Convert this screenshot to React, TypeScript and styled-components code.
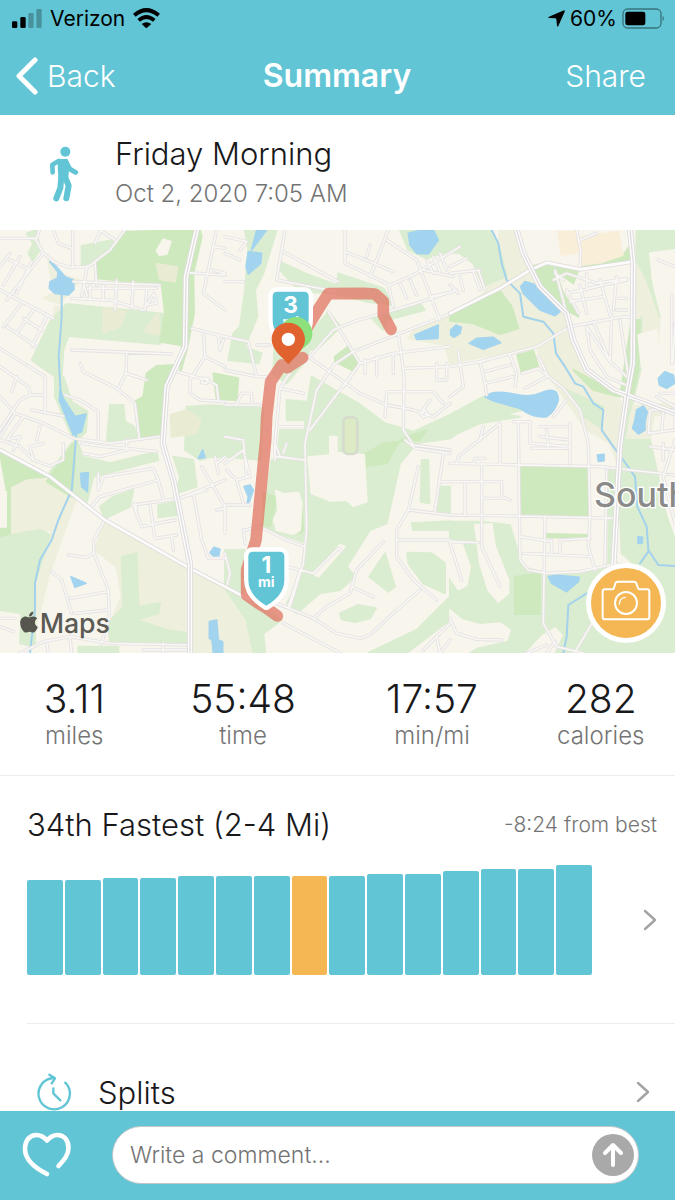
import React, { useState } from 'react';
import styled, { createGlobalStyle } from 'styled-components';
import { FaApple } from 'react-icons/fa';

const colors = {
  teal: '#61c5d5',
  orange: '#f4b754',
  text: '#19191b',
  muted: '#747474',
  line: '#ececec',
};

const GlobalStyle = createGlobalStyle`
  * {
    box-sizing: border-box;
  }

  body {
    margin: 0;
    background: #fff;
    color: ${colors.text};
    font-family: Inter, 'Liberation Sans', sans-serif;
    font-weight: 300;
  }

  button,
  input {
    font: inherit;
  }
`;

const Page = styled.div`
  display: flex;
  flex-direction: column;
  height: 100vh;
`;

const TopBar = styled.header`
  flex: none;
  background: ${colors.teal};
`;

const StatusBar = styled.div`
  display: flex;
  align-items: center;
  justify-content: space-between;
  height: 36px;
  padding: 0 10px 0 12px;
  color: #000;
  font-size: 21px;
  font-weight: 400;
`;

const StatusGroup = styled.div<{ $gap: number }>`
  display: flex;
  align-items: center;
  gap: ${({ $gap }) => $gap}px;
`;

const NavBar = styled.nav`
  display: grid;
  grid-template-columns: 1fr auto 1fr;
  align-items: center;
  height: 79px;
  padding: 0 29px 0 16px;
  color: #fff;
`;

const NavButton = styled.button<{ $end?: boolean }>`
  display: flex;
  align-items: center;
  justify-self: ${({ $end }) => ($end ? 'end' : 'start')};
  gap: 9px;
  padding: 0;
  border: 0;
  background: none;
  color: inherit;
  font-size: 30px;
  cursor: pointer;
`;

const Title = styled.h1`
  margin: 0 0 0 12px;
  font-size: 32px;
  font-weight: 600;
`;

const Content = styled.main`
  flex: 1;
  min-height: 0;
  overflow-y: auto;
  scrollbar-width: none;
`;

const Activity = styled.section`
  display: flex;
  align-items: center;
  height: 115px;
  padding: 2px 27px 0;
`;

const RowIcon = styled.div<{ $width: number }>`
  display: flex;
  justify-content: center;
  flex: none;
  width: ${({ $width }) => $width}px;
`;

const ActivityText = styled.div`
  margin-left: 14px;
`;

const ActivityName = styled.h2`
  margin: 0;
  font-size: 31px;
  font-weight: 300;
  line-height: 40px;
`;

const ActivityDate = styled.time`
  display: block;
  color: ${colors.muted};
  font-size: 24px;
  line-height: 40px;
`;

const MapBox = styled.section`
  position: relative;
  overflow: hidden;

  > svg {
    display: block;
    width: 100%;
    height: auto;
  }
`;

const CameraButton = styled.button`
  position: absolute;
  right: 9px;
  bottom: 10px;
  display: flex;
  align-items: center;
  justify-content: center;
  width: 80px;
  height: 80px;
  padding: 0 0 4px;
  border: 5px solid #fff;
  border-radius: 50%;
  background: ${colors.orange};
  cursor: pointer;
`;

const Stats = styled.section`
  display: grid;
  grid-template-columns: 22% 28% 28% 22%;
  padding: 24px 0 23px;
  border-bottom: 1px solid ${colors.line};
`;

const Stat = styled.div`
  text-align: center;
`;

const StatValue = styled.div`
  font-size: 39px;
  line-height: 43px;
`;

const StatLabel = styled.div`
  color: ${colors.muted};
  font-size: 24px;
  line-height: 32px;
`;

const Ranking = styled.section`
  margin-left: 27px;
  padding: 28px 18px 48px 0;
  border-bottom: 1px solid ${colors.line};
`;

const RankingHeader = styled.div`
  display: flex;
  align-items: center;
  justify-content: space-between;
  height: 40px;
`;

const SectionTitle = styled.h2`
  margin: 0;
  font-size: 31px;
  font-weight: 300;
`;

const Difference = styled.span`
  color: ${colors.muted};
  font-size: 21px;
`;

const RankingBody = styled.div`
  display: flex;
  align-items: center;
  gap: 51px;
  margin-top: 21px;
`;

const Chart = styled.div`
  display: flex;
  flex: 1;
  align-items: flex-end;
  gap: 2px;
  height: 110px;
`;

const Bar = styled.div<{ $active: boolean }>`
  flex: 1;
  border-radius: 2px;
  background: ${({ $active }) => ($active ? colors.orange : colors.teal)};
`;

const IconButton = styled.button`
  display: flex;
  padding: 0;
  border: 0;
  background: none;
  cursor: pointer;
`;

const SplitsRow = styled.button`
  display: flex;
  align-items: center;
  width: 100%;
  height: 136px;
  padding: 0 25px 0 27px;
  border: 0;
  background: none;
  color: ${colors.text};
  font-size: 31px;
  text-align: left;
  cursor: pointer;
`;

const SplitsLabel = styled.span`
  flex: 1;
  margin-left: 17px;
`;

const CommentBar = styled.form`
  display: flex;
  flex: none;
  align-items: center;
  gap: 40px;
  height: 89px;
  padding: 0 36px 2px 22px;
  background: ${colors.teal};
`;

const CommentField = styled.div`
  display: flex;
  flex: 1;
  align-items: center;
  height: 58px;
  padding: 0 4px 0 17px;
  border: 1px solid #c2c6c8;
  border-radius: 29px;
  background: #fff;
`;

const CommentInput = styled.input`
  flex: 1;
  min-width: 0;
  padding: 0;
  border: 0;
  outline: 0;
  background: none;
  color: ${colors.text};
  font-size: 23px;

  &::placeholder {
    color: ${colors.muted};
    opacity: 1;
  }
`;

const SendButton = styled.button`
  display: flex;
  align-items: center;
  justify-content: center;
  width: 42px;
  height: 42px;
  padding: 0;
  border: 0;
  border-radius: 50%;
  background: #a9a9a9;
  cursor: pointer;
`;

const SignalIcon = () => (
  <svg width="30" height="19" viewBox="0 0 90 57">
    <rect x="0" y="37" width="16" height="20" rx="4" />
    <rect x="25" y="24" width="16" height="33" rx="4" />
    <g opacity="0.25">
      <rect x="49" y="12" width="16" height="45" rx="4" />
      <rect x="73" y="0" width="16" height="57" rx="4" />
    </g>
  </svg>
);

const WifiIcon = () => (
  <svg width="27" height="20" viewBox="0 0 81 60" fill="none" stroke="#000">
    <path d="M4 22Q40 -9 77 22" strokeWidth="12" />
    <path d="M17 37Q40 17 64 37" strokeWidth="11" />
    <path d="M26 48Q40 37 55 48L40 61Z" fill="#000" stroke="none" />
  </svg>
);

const LocationIcon = () => (
  <svg width="17" height="17" viewBox="0 0 51 51">
    <path d="M48 1Q51 1 50 5L31 48Q28 52 27 47L25 27Q24 25 22 25L3 24Q-2 23 3 20Z" />
  </svg>
);

const BatteryIcon = () => (
  <svg width="43" height="21" viewBox="0 0 129 63">
    <rect x="3" y="3" width="114" height="57" rx="14" fill="none" stroke="#000" strokeOpacity="0.42" strokeWidth="4" />
    <rect x="10" y="11" width="60" height="41" rx="7" />
    <path d="M122 23Q129 31 122 40Z" opacity="0.45" />
  </svg>
);

const BackIcon = () => (
  <svg width="22" height="38" viewBox="0 0 22 38" fill="none" stroke="#fff" strokeWidth="5" strokeLinecap="round" strokeLinejoin="round">
    <path d="M19 3L3 19L19 35" />
  </svg>
);

const WalkIcon = () => (
  <svg width="30" height="56" viewBox="0 0 90 168" fill="none" stroke={colors.teal} strokeLinecap="round" strokeLinejoin="round">
    <circle cx="49" cy="17" r="15" fill={colors.teal} stroke="none" />
    <path d="M30 45H52Q55 65 52 94H34Q32 70 32 50Z" fill={colors.teal} strokeWidth="12" />
    <path d="M29 45L10 56L11 79" strokeWidth="14" />
    <path d="M50 46L62 69L80 79" strokeWidth="15" />
    <path d="M37 92L34 126L22 157" strokeWidth="18" />
    <path d="M47 90L59 119L52 157" strokeWidth="18" />
  </svg>
);

const ChevronIcon = () => (
  <svg width="14" height="22" viewBox="0 0 14 22" fill="none" stroke="#a3a3a3" strokeWidth="2.4" strokeLinecap="round" strokeLinejoin="round">
    <path d="M2 2L12 11L2 20" />
  </svg>
);

const SplitsIcon = () => (
  <svg width="36" height="38" viewBox="0 0 108 114" fill="none" stroke={colors.teal} strokeWidth="7" strokeLinecap="round" strokeLinejoin="round">
    <path d="M88 29A47 47 0 1 1 54 15" />
    <path d="M40 5L57 16L47 31" />
    <path d="M52 46V61L73 82" />
  </svg>
);

const HeartIcon = () => (
  <svg width="50" height="46" viewBox="0 0 50 46" fill="none" stroke="#fff" strokeWidth="4.6" strokeLinecap="round" strokeLinejoin="round">
    <path d="M25 42C13 36 3 28 3 17C3 8 8 3 14.500 3C19 3 22 5 25 8.500C28 5 31 3 35.500 3C42 3 46.500 8 46.500 16C46.500 23 42 28 36.500 34" />
  </svg>
);

const CameraIcon = () => (
  <svg width="50" height="42" viewBox="0 0 150 126" fill="none" stroke="#fff" strokeWidth="6" strokeLinecap="round" strokeLinejoin="round">
    <path d="M11 28H34Q38 28 39 24L43 10Q45 5 50 5H99Q104 5 106 10L111 24Q112 28 116 28H139Q145 28 145 34V112Q145 118 139 118H11Q5 118 5 112V34Q5 28 11 28Z" />
    <circle cx="75" cy="69" r="33" />
    <path d="M55 72Q56 54 73 52" strokeWidth="4" />
  </svg>
);

const ArrowUpIcon = () => (
  <svg width="22" height="26" viewBox="0 0 22 26" fill="none" stroke="#fff" strokeWidth="4" strokeLinecap="round" strokeLinejoin="round">
    <path d="M11 23V4M3 11L11 3L19 11" />
  </svg>
);

/** Map geometry, one list per kind of ground */
const meadows = [
  'M30 770L105 735L230 800L150 1025L105 1200L60 1220L100 1110L155 900L35 910Z',
  'M285 960L315 870L570 1015L700 1085L745 1180L760 1269H575L570 1240L400 1210L330 1180L365 1100L350 1010Z',
  'M1500 0H1550L1590 130L1700 260L1730 380L1820 480L1880 530L1860 720L1830 640L1760 600L1640 430L1610 350L1350 400L1335 345L1225 325L1245 295L1350 260L1450 190L1480 150Z',
  'M1910 0H2025V60L1960 80V160L1990 180L1985 340L1975 400L1920 410L1900 520L1880 560L1900 300Z',
  'M1875 530L2025 520V540L1960 560L1940 700L1870 720Z',
  'M145 90L175 130L240 150L180 220L130 205L160 190Z',
  'M165 230L200 230L175 420L145 410Z',
];

const lightGreens = [
  'M80 10L110 0L120 60L98 92L85 70L100 40Z',
  'M245 48L350 28L300 90L245 108Z',
  'M200 222L380 240L495 252L480 342L205 318L190 360L185 440L165 440L95 390L150 275Z',
  'M165 440H190L215 515L262 545L258 605L225 640L190 560L165 500Z',
  'M330 525L370 525L375 575L402 590L415 625L320 640Z',
  'M560 530L640 526L790 535L780 690L675 680L600 682L555 655Z',
  'M735 0H830L790 130L765 180L772 260L735 350L785 370L775 400L685 390L700 310L720 290L735 180L745 60Z',
  'M840 95L915 130L1010 165L1015 130L1150 175L1180 225L1100 215L1000 190L900 185L835 115Z',
  'M985 245L1022 290L960 350L925 362L932 310Z',
  'M825 300L930 360L910 400L860 460L820 430Z',
  'M860 510L920 515L912 570L860 570ZM840 600H910V690H830Z',
  'M1110 260L1260 220L1275 240L1160 270L1150 300Z',
  'M935 440L1075 520L1155 580L1240 605L1350 555L1450 500L1570 540L1430 570L1350 625L1250 640L1200 700L1180 790L1160 880L1110 900L1040 1010L1065 1040L1020 1080L960 1090L890 1150L860 1120L900 1060L920 900L915 560Z',
  'M815 690L920 680L922 940L860 920L785 890Z',
  'M675 960L735 960L745 1080L700 1100L675 1070Z',
  'M675 1075L750 1110L845 1170L790 1210L795 1269H760L740 1170Z',
  'M1155 970L1185 1070L1165 1085L1108 1040Z',
  'M1235 880L1350 874V900H1240Z',
  'M1222 968L1295 970L1335 1000V1090L1270 1060L1225 1000Z',
  'M1020 1150L1075 1125L1128 1135L1110 1165L1065 1176L1025 1168Z',
  'M1315 770H1350V850H1310ZM1265 690H1285L1288 820L1262 815Z',
  'M1105 1269L1250 1200L1350 1100V1170L1220 1269Z',
  'M0 920L120 900L150 915L105 1060V1250L60 1240L65 1150L0 1140Z',
  'M230 630L250 680L330 700L470 665L475 690L280 740L260 820L220 800L140 740L215 640Z',
  'M300 830L340 800L400 780L390 830L315 865Z',
  'M365 980L410 970L415 1130L480 1120L475 1150L410 1170L500 1200L570 1210L565 1240L330 1240L325 1180L370 1130Z',
  'M520 680L580 690L590 770L530 790L540 740ZM475 825L530 815L532 855L475 862Z',
  'M560 630H675V670L600 690L555 660ZM235 1250H355V1269H235Z',
  'M1200 0H1470L1500 60L1520 140L1480 155L1450 170L1420 100L1380 70L1340 66L1280 85L1225 60Z',
  'M1910 0H2025V60L1955 62L1950 150L1990 160L1980 260L1940 150L1910 90Z',
  'M1350 560L1460 545L1560 560L1440 580L1350 620Z',
  'M1700 480L1810 530L1800 590L1750 560Z',
  'M1350 875H1440L1530 885L1555 970L1565 1010L1640 1030L1800 1020L1850 1000L2025 1030V1269H1350Z',
  'M1825 720H1850L1840 1000H1825Z',
  'M1865 630H1950L1970 720L2000 860L2025 930V1050L1910 1010L1865 970L1855 720Z',
  'M1895 510L1925 260L1922 420L1885 560L1860 720V650Z',
];

const parks = [
  'M375 5L580 0L555 150L542 345L480 335L495 250L485 165L290 145L285 105Z',
  'M600 0L605 20L580 130L582 250L560 360L540 430L555 200L590 0Z',
  'M470 408L525 405L495 480L485 620L415 622L405 515L430 500L440 430Z',
  'M640 430L715 445L710 510L650 508Z',
  'M150 740L220 640L225 700L215 800L140 755ZM0 670L150 740L80 745L30 770V910L0 920V790L20 780Z',
  'M1045 350L1078 400L1065 425L1005 395L1005 380Z',
  'M1350 250L1500 183L1535 230L1555 295L1500 312L1420 280L1350 272Z',
  'M1590 110L1640 98L1735 120L1720 160L1665 120L1690 190L1735 260L1690 235L1600 130Z',
  'M1740 70L1750 110L1900 90L1895 40L1870 75L1800 105Z',
  'M1552 375L1600 362L1615 410L1565 428Z',
  'M1560 705L1765 710V860L1560 855Z',
  'M1545 1040L1620 1030V1152H1545Z',
  'M1900 490L1880 520L1870 500L1720 420L1780 480L1860 500L1895 270H1920L1915 420Z',
  'M1640 912L1765 915V925L1640 922Z',
  'M1260 630L1280 600L1200 630L1160 700L1090 710L1090 675L1150 640Z',
  'M790 790L830 800L810 890L790 885ZM880 820L905 830L910 900L900 910Z',
];

const clearings = [
  'M490 28L512 35L500 72L478 75L470 62Z',
  'M925 682L990 676V620H1010V668L1092 675L1100 815L1060 828L1040 810L990 812L935 790Z',
  'M828 782L850 792L895 788L905 820L900 900L880 912L830 900L822 870L835 840Z',
  'M1350 930L1385 940L1410 1010L1400 1065L1375 1078L1350 1040Z',
  'M1425 885L1475 882L1485 950L1525 1050L1525 1090L1495 1115L1465 1080L1440 1000Z',
  'M1350 1140L1385 1170L1440 1185L1500 1180L1530 1200L1520 1230L1430 1250L1400 1269H1350Z',
  'M1625 1220L1665 1195L1685 1215L1660 1269H1580Z',
  'M1915 315L1970 300L1980 400L1925 410ZM0 780L18 785V890L0 890Z',
  'M1950 70L2025 60V520L1975 430L1985 260L1960 160Z',
  'M945 1035L1020 945L1035 950L955 1040Z',
];

const sand = [
  'M470 102L532 112L525 155L480 148ZM310 235L378 245L360 290L310 308ZM440 290L475 250L478 315L435 305Z',
  'M512 555L560 540L602 570L590 610L515 620Z',
];

const schools = [
  'M1675 5L1730 5L1740 65L1685 75Z',
  'M1745 20L1855 5L1868 75L1810 95L1745 105Z',
];

const waters = [
  'M150 155L172 145L175 120L160 100L195 140L220 150L222 178L205 195L165 190L148 175Z',
  'M180 480L190 505L225 560L258 552L245 605L220 615L195 555L178 510Z',
  'M770 0L800 0L770 40L755 60ZM745 65L785 70L782 100L745 132L738 110Z',
  'M1225 10L1265 0H1300L1315 30L1285 72L1250 70L1230 45Z',
  'M1245 315L1315 285L1314 325L1250 328Z',
  'M1562 170L1575 155L1600 162L1675 225L1680 245L1665 257L1620 240L1570 190Z',
  'M1352 300L1368 285L1384 292L1380 310L1362 322L1352 315Z',
  'M1408 340L1430 325L1480 322L1502 338L1450 358Z',
  'M1455 500Q1475 480 1530 490Q1590 505 1620 490Q1675 465 1675 510Q1665 545 1640 560Q1600 565 1560 535L1480 513Z',
  'M1975 445L1995 425L2020 435L2024 460L2000 475L1978 465Z',
  'M1910 540L1930 528L1942 545L1935 575L1935 600L1915 612L1898 595L1905 570Z',
  'M242 730L265 728L262 785L245 770ZM595 685L608 660L615 682Z',
  'M213 1040L235 1050L258 1060L225 1072ZM630 968L642 952L660 958L656 978L640 978Z',
  'M732 770L750 765L760 780L748 815L742 818L745 800Z',
  'M628 1175L650 1170L655 1230L668 1235V1269H640L636 1230L628 1225Z',
  'M1645 1040L1670 1035L1738 1042L1735 1055L1700 1085L1655 1060Z',
  'M1792 675L1812 673V692L1795 694ZM1914 920L1928 922L1926 940H1914Z',
];

const streams = [
  'M150 95L178 130L185 190L185 260L176 380L182 490',
  'M230 600L215 780L175 870L155 930L120 990L105 1060V1140L90 1269',
  'M1475 0L1495 40L1505 100L1520 150L1560 190L1570 260L1630 275L1660 310L1668 370L1695 410L1725 460L1750 470L1780 520L1810 540L1805 600L1840 650L1870 690L1905 740L1912 830L1940 890L1945 960L1975 1005L2025 1008',
  'M1945 965L1920 1000M1760 1090L1705 1125L1700 1220L1690 1269',
];

const streets = [
  // north west
  'M0 25H105L130 70L170 100L210 112L265 110L330 60L375 0M110 25L118 0M160 0L175 40L215 55M218 0V110M285 40L300 5M300 0L345 30M262 108L245 200M285 100L290 165',
  'M130 70L90 120L20 210M0 180L160 265M30 70L0 110M60 80L10 165M95 95L50 190M90 120L30 90M65 220L10 290M100 240L50 310M140 260L95 350M70 265L125 300M20 290L110 350',
  'M215 205L350 212M220 155L480 165M250 155L262 200M270 165V205M310 165V210M350 150L345 240M400 155L395 235M262 175H470M345 215L430 240M440 180L435 240M462 190L440 225L470 220Z',
  'M215 360L515 372M380 370L378 430L355 475M378 430L440 450M240 400L250 425L350 475L405 520L418 625M195 495L240 510L295 545V635',
  'M0 355L135 440V545M0 410L85 470L92 495L60 510L0 600M92 495H135M50 440L35 485M95 540L190 558M0 500L45 550L0 620M45 550L130 580L220 625L330 640L490 618',
  'M70 560L20 630M120 590L110 630M0 630L60 650L100 690L150 708L190 690V640M20 630L60 620L40 660M100 690L90 650L130 640',
  'M675 135L560 128M675 55L640 50M650 0L610 190L675 240M640 120L675 130M575 295L675 320M610 310L615 380L675 410M615 380L570 450V490L600 510L675 515M530 425L620 450L650 465L655 510M655 320L660 360L670 330',
  'M605 445H625L620 460L605 458Z',
  // north centre
  'M675 20L740 35L720 60M675 70L720 90M675 155H730M855 0L830 150L1010 185M850 65L1015 155M1035 0V100L1170 165L1240 135L1380 50M1165 0L1110 140M1035 65L1110 95L1180 125M1160 30L1250 90M1110 45L1100 80',
  'M1250 90L1320 270M1165 165L1180 230M1200 160L1220 205M1230 150L1250 195M1270 120L1360 140M1280 90L1300 130M1300 80L1320 125M1320 70L1340 120M1290 200L1360 185',
  'M1370 180L1250 220L1060 275L1000 300L930 380M1350 252L1200 310L1060 365L1000 405L950 480L915 640M985 245L1080 400L1030 470M1080 400L1180 370L1350 350M1080 400L930 600',
  'M925 380L1080 490L1160 525L1240 540L1300 560L1350 520M1195 310L1212 440L1210 600L1240 645L1350 660M1095 390V430M1130 380V435M1180 370V430M1160 485H1300L1330 520M1160 485L1155 560M1265 545L1290 510',
  'M1310 400V450H1340V400M1262 550L1275 540L1285 555L1270 562Z',
  'M675 320L745 335L770 440L675 420M770 345H810M770 440H800M840 475L910 490M830 590H910M725 490L710 520M725 490H755V520M675 525H780M675 620L730 630',
  'M870 430L840 475L825 640V680L915 690',
  // north east
  'M1350 110L1400 85M1350 165L1375 190M1380 140L1390 180M1420 125L1440 180M1435 120L1455 180M1350 130L1440 120',
  'M1212 415L1350 410L1440 395L1610 350L1710 290L1870 260L1900 262M1375 365L1390 470L1350 500M1440 395L1455 460L1540 440M1455 460L1460 495M1530 375L1550 430L1545 470M1455 425L1530 405M1565 430L1615 415L1690 475L1740 540L1765 640',
  'M1575 475L1640 440M1615 380L1640 430M1660 560L1700 510',
  'M1665 120L1700 250M1700 130L1790 160L1880 145M1700 190L1880 150M1710 215L1810 200M1700 180L1735 250M1740 165L1760 250M1800 150L1830 255M1850 140L1840 240M1660 150L1700 130M1760 130V180M1855 205H1880M1850 240H1880M1665 130L1690 150',
  'M1730 0L1742 60L1740 120M1740 30L1790 10M1760 290L1830 395L1870 430L1885 445M1830 395L1835 255M1780 275L1830 395M1860 270L1885 440M1760 290L1770 360L1820 440L1890 470',
  'M1975 90L2025 110M2015 195V400M2025 280L2018 400M1950 540H2025V600L1945 610ZM1990 545L1985 605M1970 500L2025 530M2025 490H1980',
  // south west
  'M295 780L310 740L460 715L475 750L300 800L270 835M295 730L295 780M275 830L300 800M475 750L490 810M245 640L310 650L380 655L470 665M380 650V630M250 670L300 680L380 660',
  'M400 825L540 805L675 750M400 825L425 890L525 870M450 825L465 925L530 915M515 920L520 960M410 840L405 820M535 805L620 780',
  'M315 870L280 930L282 970L325 1080L328 1160L305 1240M205 975L260 982L280 970M155 1025L185 1050L215 1150M210 1105L325 1085M225 1150L325 1140M60 1269L130 1235L210 1220L330 1240L575 1245M430 1260H570M490 1240V1269M210 1220L215 1269M140 1240L145 1269M0 1190L40 1205M0 1165H45',
  'M605 710L675 830V910M580 790L605 930L625 985H675M645 680L655 730M675 680L650 700M650 840L675 835',
  'M675 700L730 660L750 740L710 750L680 720M675 825H750M710 750L730 820M730 630L740 740M730 900L735 940L755 945M735 900L780 890L860 930L915 950M860 1010L940 1030L1015 955L1025 965M900 1020L865 1130M675 970L690 1030L680 1070',
  'M915 640L920 900L910 1000L870 1130M825 640L840 680L910 690M825 640V690M860 640L850 670',
  // south centre
  'M1255 710L1225 840L1190 900V980L1240 1050L1310 1110M1190 930H1350M1150 935L1070 1020L1050 1090L980 1130L940 1165M1055 1070L1120 1100M1225 840L1350 855M1330 670L1305 845M1215 630L1245 655L1350 670M1320 755H1350',
  'M830 1120L940 1165L1010 1210L1080 1225L1110 1215L1190 1140L1260 1080M850 1180L1020 1269M1350 1180L1270 1260M1310 1220L1320 1269M1350 1230L1320 1269',
  // south east
  'M1350 700L1800 710L2025 735M1555 575L1560 990L1585 1020L1640 1030L1740 1025L1850 1000M1370 700L1375 680L1500 580V700M1440 630L1450 590M1540 575H1590V640M1590 640L1710 650M1620 590H1700M1620 620L1710 630M1710 580V700M1640 600L1645 650M1595 655H1700M1765 640L1770 860L1765 950L1785 1020',
  'M1350 755H1505V800L1530 810M1395 760V855M1350 855L1560 858L1850 865M1445 700V950L1500 1070M1350 935L1435 938M1445 805H1505M1635 860L1630 1180L1670 1250L1750 1269M1560 920L1655 935M1655 930V975M1680 930L1770 925M1680 930V975L1570 970M1570 970L1770 980M1820 720L1815 1000M1640 1245L1580 1269M1420 700L1425 685H1455',
  'M1350 940L1385 1050M1350 1165L1370 1210L1430 1228L1505 1230M1665 1235L1640 1269M1725 1266L1800 1140L1850 1080M2025 630L1990 740L2025 880M1950 650L2025 660M1990 640V690',
];

const avenues = [
  'M590 0L558 140L555 350L500 470L488 640L520 750L570 1000V1269',
  'M1550 0L1570 70L1620 170L1700 250L1720 330L1760 420L1840 480L2025 550',
  'M1890 0L1900 100L1898 400L1880 500L1860 645L1840 1010',
];

const throughRoads = [
  'M1350 250L1500 175L1590 120L1640 98L1740 118L1900 95',
  'M0 660L150 740L315 870L570 1015L675 1070L750 1110',
];

const Shield = ({ x, y, mile }: { x: number; y: number; mile: number }) => (
  <g transform={`translate(${x} ${y})`}>
    <path
      d="M-40 0H40Q54 0 54 14V84Q54 130 0 162Q-54 130 -54 84V14Q-54 0 -40 0Z"
      fill={colors.teal}
      stroke="#fff"
      strokeWidth="26"
      strokeLinejoin="round"
      paintOrder="stroke"
    />
    <g fill="#fff" fontWeight="700" textAnchor="middle">
      <text y="63" fontSize="68">
        {mile}
      </text>
      <text y="105" fontSize="42">
        mi
      </text>
    </g>
  </g>
);

const RouteMap = () => {
  const fill = (paths: string[], color: string) => (
    <path d={paths.join('')} fill={color} stroke={color} strokeWidth="6" strokeLinejoin="round" />
  );

  return (
    <svg viewBox="0 0 2025 1269" role="img" aria-label="Route map">
      <rect width="2025" height="1269" fill="#f8f5ed" />
      {fill(meadows, '#eeefdc')}
      {fill(lightGreens, '#dbedd0')}
      {fill(parks, '#cfe9bf')}
      {fill(clearings, '#f8f5ed')}
      {fill(sand, '#e9ecd2')}
      {fill(schools, '#f9efd8')}
      <g fill="none" strokeLinejoin="round" strokeLinecap="round">
        <path d={streams.join('')} stroke="#a3d2ec" strokeWidth="6" />
        <path d={waters.join('')} fill="#a3d4ef" stroke="#a3d4ef" strokeWidth="5" />
        <rect x="1030" y="562" width="42" height="110" rx="14" fill="#dcebc4" stroke="#d5dccd" strokeWidth="8" />
        <path d={streets.join('')} stroke="#e4e1e3" strokeWidth="10" />
        <path d={streets.join('')} stroke="#f9f7f3" strokeWidth="5" />
        <path d={throughRoads.join('')} stroke="#dddbdd" strokeWidth="13" />
        <path d={throughRoads.join('')} stroke="#fdfcfa" strokeWidth="8" />
        <path d={avenues.join('')} stroke="#dddbde" strokeWidth="18" />
        <path d={avenues.join('')} stroke="#fdfcfa" strokeWidth="13" />
        <path d={avenues.join('')} stroke="#dfdddf" strokeWidth="4" />
        <g opacity="0.78" stroke="#e27a68" strokeWidth="35">
          <path d="M1173 298L1150 255V215L1125 192L1090 190L985 191L960 230L905 320M908 383L862 413L845 405L812 455L800 560L797 630L768 930L740 1020V1095L775 1120L800 1135L832 1158" />
        </g>
      </g>
      <text x="1782" y="831" fill="#8a8a88" stroke="#fff" strokeWidth="8" paintOrder="stroke" fontSize="102" fontWeight="500">
        South
      </text>
      <FaApple x="51" y="1140" size="72" color="#56564f" />
      <text x="119" y="1210" fill="#5b5a54" fontSize="80" fontWeight="500">
        Maps
      </text>
      <Shield x={872} y={185} mile={3} />
      <circle cx="888" cy="310" r="49" fill="#8ee07c" />
      <path d="M865 278C893 278 915 300 915 328C915 360 885 380 865 403C845 380 815 360 815 328C815 300 837 278 865 278Z" fill="#e0622f" />
      <circle cx="865" cy="328" r="20" fill="#fff" />
      <Shield x={799} y={965} mile={1} />
    </svg>
  );
};

const stats = [
  { value: '3.11', label: 'miles' },
  { value: '55:48', label: 'time' },
  { value: '17:57', label: 'min/mi' },
  { value: '282', label: 'calories' },
];

const paces = [95, 95, 97, 97, 99, 99, 99, 99, 99, 101, 101, 104, 106, 106, 110];
const currentPace = 7;

const App = () => {
  const [comment, setComment] = useState('');

  const handleSubmit = (e: React.FormEvent) => {
    e.preventDefault();
    setComment('');
  };

  return (
    <>
      <GlobalStyle />
      <Page>
        <TopBar>
          <StatusBar>
            <StatusGroup $gap={8}>
              <SignalIcon />
              <span>Verizon</span>
              <WifiIcon />
            </StatusGroup>
            <StatusGroup $gap={5}>
              <LocationIcon />
              <span>60%</span>
              <BatteryIcon />
            </StatusGroup>
          </StatusBar>
          <NavBar>
            <NavButton type="button">
              <BackIcon />
              Back
            </NavButton>
            <Title>Summary</Title>
            <NavButton type="button" $end>
              Share
            </NavButton>
          </NavBar>
        </TopBar>

        <Content>
          <Activity>
            <RowIcon $width={74}>
              <WalkIcon />
            </RowIcon>
            <ActivityText>
              <ActivityName>Friday Morning</ActivityName>
              <ActivityDate dateTime="2020-10-02T07:05">Oct 2, 2020 7:05 AM</ActivityDate>
            </ActivityText>
          </Activity>

          <MapBox>
            <RouteMap />
            <CameraButton type="button" aria-label="Add photo">
              <CameraIcon />
            </CameraButton>
          </MapBox>

          <Stats>
            {stats.map(({ value, label }) => (
              <Stat key={label}>
                <StatValue>{value}</StatValue>
                <StatLabel>{label}</StatLabel>
              </Stat>
            ))}
          </Stats>

          <Ranking>
            <RankingHeader>
              <SectionTitle>34th Fastest (2-4 Mi)</SectionTitle>
              <Difference>-8:24 from best</Difference>
            </RankingHeader>
            <RankingBody>
              <Chart>
                {paces.map((pace, i) => (
                  <Bar key={i} $active={i === currentPace} style={{ height: `${(pace / 110) * 100}%` }} />
                ))}
              </Chart>
              <IconButton type="button" aria-label="All rankings">
                <ChevronIcon />
              </IconButton>
            </RankingBody>
          </Ranking>

          <SplitsRow type="button">
            <RowIcon $width={54}>
              <SplitsIcon />
            </RowIcon>
            <SplitsLabel>Splits</SplitsLabel>
            <ChevronIcon />
          </SplitsRow>
        </Content>

        <CommentBar onSubmit={handleSubmit}>
          <IconButton type="button" aria-label="Like">
            <HeartIcon />
          </IconButton>
          <CommentField>
            <CommentInput
              aria-label="Comment"
              placeholder="Write a comment..."
              value={comment}
              onChange={(e) => setComment(e.target.value)}
            />
            <SendButton type="submit" aria-label="Send">
              <ArrowUpIcon />
            </SendButton>
          </CommentField>
        </CommentBar>
      </Page>
    </>
  );
};

export default App;
